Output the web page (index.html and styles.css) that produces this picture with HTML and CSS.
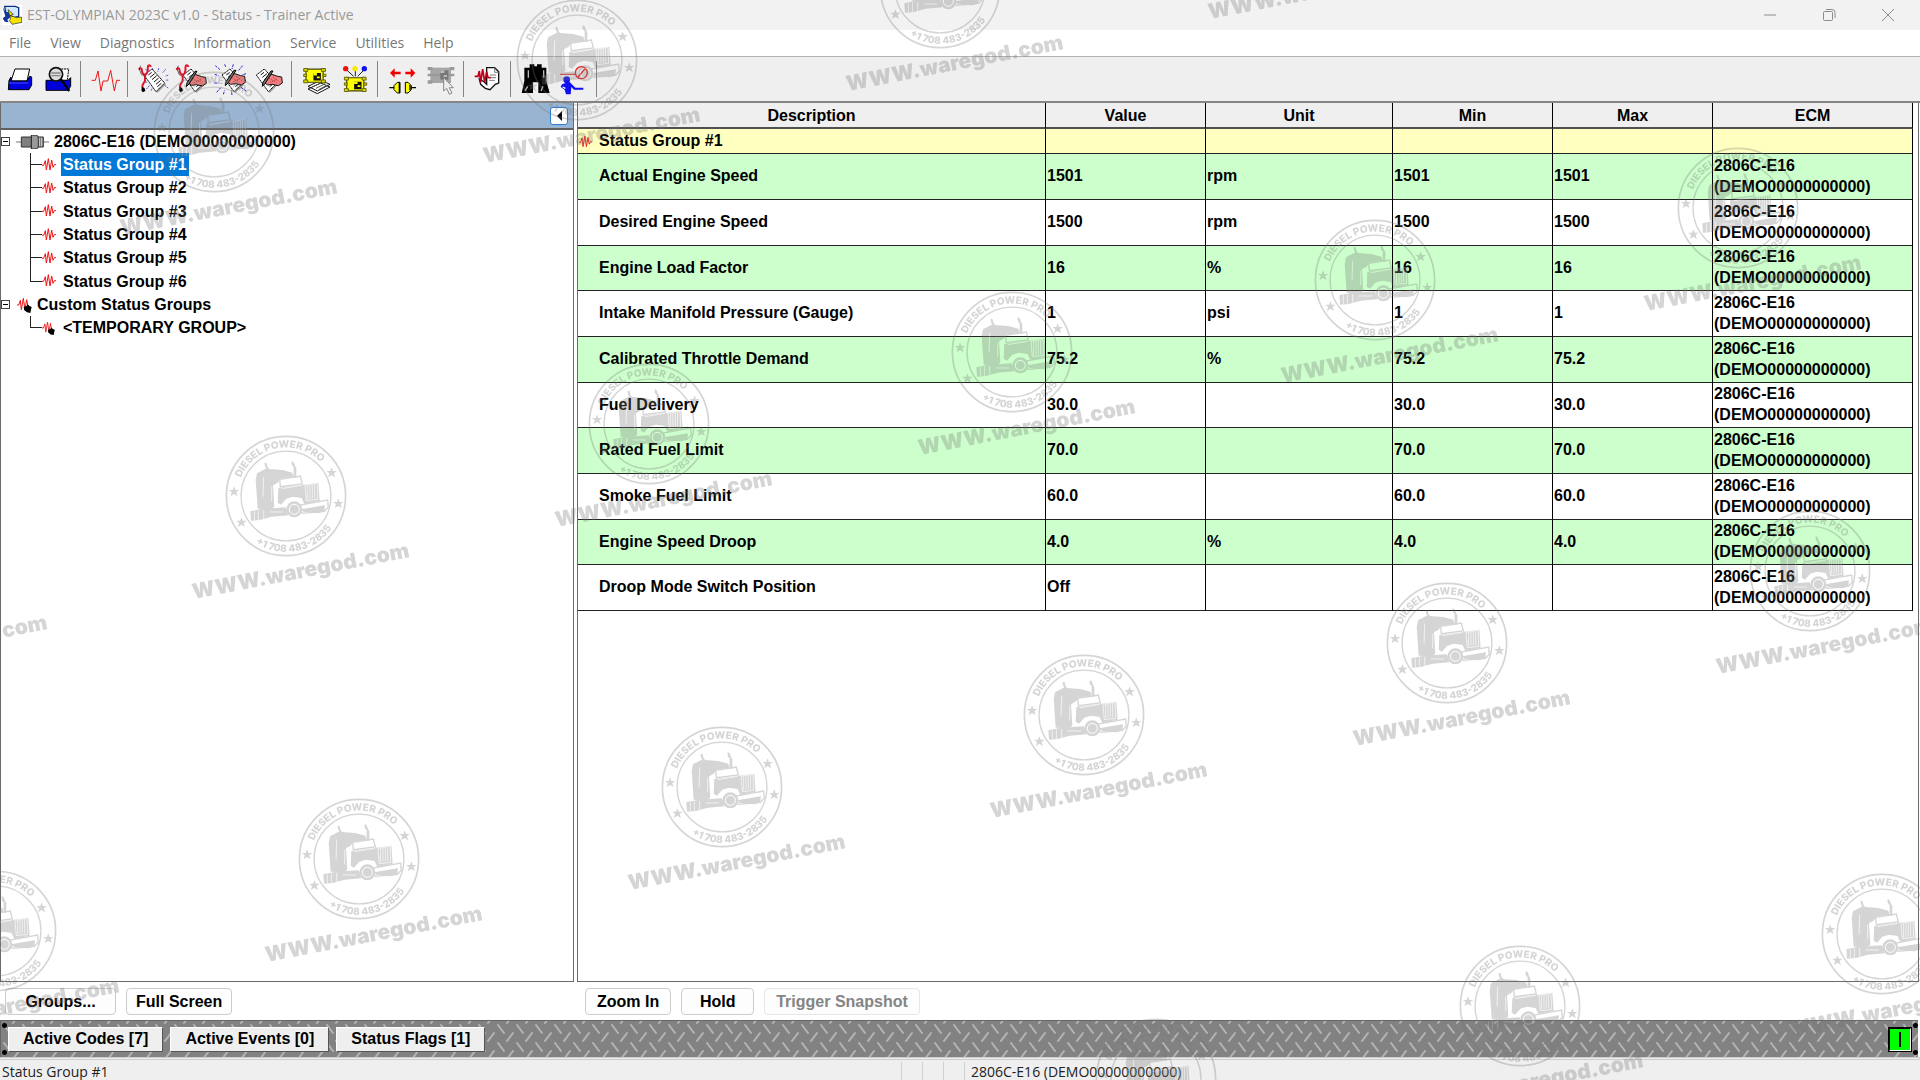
FILE: index.html
```html
<!DOCTYPE html>
<html lang="en">
<head>
<meta charset="utf-8">
<title>EST-OLYMPIAN 2023C v1.0 - Status - Trainer Active</title>
<link rel="stylesheet" href="styles.css">
</head>
<body>
<svg class="defs" aria-hidden="true">
  <defs>
    <symbol id="wave" viewBox="0 0 42 42"><path d="M0 22h5l5-14 3 28 6-34 5 34 5-30 4 22 4-8h5" fill="none" stroke="#f01414" stroke-width="3"/></symbol>
    <symbol id="wave-custom" viewBox="0 0 48 48"><path d="M0 24h5l5-14 3 28 6-34 5 34 5-30 4 22h8" fill="none" stroke="#f01414" stroke-width="3"/><path d="M20 30l8-2 4-6 6 6 6 2-2 8-2 10-10-2-8-6z" fill="#000"/></symbol>
    <symbol id="page" viewBox="0 0 99 99"><path d="M24 36l24-18 38 42-26 26z" fill="#999" transform="translate(4 4)"/><path d="M24 36l24-18 38 42-26 26z" fill="#fff" stroke="#111" stroke-width="3" stroke-dasharray="5 1"/><path d="M37 36l10-8M42 43l14-11M48 50l14-12M54 57l14-12M60 64l14-12M64 71l12-10" stroke="#111" stroke-width="3"/></symbol>
    <symbol id="scope" viewBox="0 0 99 99"><path d="M4 20c6-8 10-4 10 4s8 14 14 8 2-16 4-22 8-2 8 2M25 35c-6 8 2 14-4 22s-8 14-4 20" fill="none" stroke="#e0142c" stroke-width="6"/><path d="M10 8l-4 10 6 16 10 6" fill="none" stroke="#222" stroke-width="2"/><path d="M14 72l8 4 2 8-8 4-4-6z" fill="#000"/></symbol>
    <symbol id="hand" viewBox="0 0 99 99"><path d="M36 46l18-14 18 6 12 2 2 18-12 8-18-4-14 2-8-6z" fill="#f08080" stroke="#111" stroke-width="3"/><path d="M46 44l22 12M58 40l18 14M50 56l20-10" stroke="#b83434" stroke-width="3" stroke-dasharray="3 3"/><path d="M58 22L34 60l-8 8 2-12 24-34z" fill="#777" stroke="#000" stroke-width="3"/></symbol>
    <symbol id="rays" viewBox="0 0 99 99"><path d="M58 4l-4 14M86 8L74 22M96 32l-12 4M96 52H84M96 84L80 72M54 96l-2-14M32 4l4 10M4 8l14 12M2 34l12 4M2 60h12M8 88l14-16M28 94l4-12" stroke="#2222e8" stroke-width="3" stroke-dasharray="8 3"/></symbol>
    <symbol id="chip" viewBox="0 0 99 70"><path d="M18 12h60v46H18z" fill="#ff0" stroke="#444400" stroke-width="4"/><path d="M10 10h14v10H10zM72 10h14v10H72zM10 30h10v8H10zM78 30h10v8H78zM10 50h14v10H10zM72 50h14v10H72z" fill="#d8d800" stroke="#555500" stroke-width="3"/><path d="M44 26h26v26H44z" fill="#111"/><path d="M44 26h12v8H44zM56 38h10v6H56z" fill="#ff0"/></symbol>
    <symbol id="star" viewBox="-12 -12 24 24"><path d="M0-12l3 8h9l-7 5 3 9-8-5-8 5 3-9-7-5h9z"/></symbol>
    <path id="arc-top" d="M-146 0A146 146 0 0 1 146 0"/>
    <path id="arc-bottom" d="M-168 0A168 168 0 0 0 168 0"/>
    <g id="stamp">
      <g transform="scale(.333)">
        <g fill="none" stroke="currentColor"><circle r="179" stroke-width="5"/><circle r="135" stroke-width="4"/></g>
        <g class="stamp-ring" transform="rotate(-11)">
          <text><textPath href="#arc-top" startOffset="50%">DIESEL POWER PRO</textPath></text>
          <text><textPath href="#arc-bottom" startOffset="50%">+1 708 483-2835</textPath></text>
        </g>
        <g transform="translate(-319 -228)" fill="currentColor">
          <use href="#star" x="147" y="199" width="32" height="32"/><use href="#star" x="440" y="142" width="32" height="32"/>
          <use href="#star" x="169" y="292" width="32" height="32"/><use href="#star" x="460" y="235" width="32" height="32"/>
          <path d="M232 160l26-14 50 4 30 8 4 12-40 6-8 12-14 8 4 64-12 8-38-2-6-86z"/>
          <path d="M262 250V150q-6-8-8-20l6-2 4 14 8 10v90zM342 172V142q-8-6-6-18l6 2 4 12 4 6v30z"/>
          <path d="M300 178l62-10 6 24-66 8z" fill="none" stroke="currentColor" stroke-width="4"/>
          <path d="M296 204l76-10 44-6 4 54-46 10-8-18-26-4-20 6-16 18-10-6z"/>
          <path d="M376 196l36-6 2 48-34 4z" fill="none" stroke="#fff" stroke-width="2"/>
          <path d="M384 196v42M391 195v42M398 194v42M405 193v42M306 206l60-10M252 170l-2 60M276 200v44" stroke="#fff" stroke-width="2"/>
          <path d="M356 256l88-16 2 22-12 12-66 6z" fill="none" stroke="currentColor" stroke-width="4"/>
          <path d="M364 268l72-12-2 18-18 6-44-4z"/>
          <path d="M212 274l38-8 68-4 8 24-50 4-36 10-26 2z"/>
          <path d="M224 274v26M236 272v28M252 270v26M270 276h40" stroke="#fff" stroke-width="2"/>
          <circle cx="344" cy="268" r="24"/><circle cx="344" cy="268" r="15" fill="none" stroke="#fff" stroke-width="3"/>
        </g>
      </g>
      <text class="stamp-url" transform="translate(16 82) rotate(-11)">WWW.waregod.com</text>
    </g>
  </defs>
</svg>

<header class="titlebar">
  <svg class="app-icon" viewBox="0 0 60 60" aria-hidden="true"><path d="M0 0h60v60H0z" fill="#fff"/><path d="M8 4h32l10 4v26l-14 4L12 26z" fill="#cfe8fa" stroke="#102a80" stroke-width="4"/><path d="M2 6l8 14 10 2 6 14-10 8 4 8-12-2L2 40l8-6z" fill="#123a9c"/><path d="M18 14l16 14-10 4 22 6 12-2 2 16-30 6-8-12 4-4z" fill="#f4e400" stroke="#222" stroke-width="2"/></svg>
  <h1 class="title">EST-OLYMPIAN 2023C v1.0 - Status - Trainer Active</h1>
  <div class="window-controls">
    <button aria-label="Minimize"><svg viewBox="0 0 14 14"><path d="M1 7h12"/></svg></button>
    <button aria-label="Restore"><svg viewBox="0 0 14 14"><rect x="1.500" y="3.500" width="9" height="9" rx="1"/><path d="M4 1.500h6a3 3 0 0 1 3 3V10"/></svg></button>
    <button aria-label="Close"><svg viewBox="0 0 14 14"><path d="M1 1l12 12M13 1L1 13"/></svg></button>
  </div>
</header>

<nav class="menubar">
  <button>File</button><button>View</button><button>Diagnostics</button><button>Information</button><button>Service</button><button>Utilities</button><button>Help</button>
</nav>

<div class="toolbar" role="toolbar" aria-label="Main tools">
  <button aria-label="Print"><svg viewBox="0 0 99 99"><path d="M36 18h44l-8 36H24z" fill="#fff" stroke="#000" stroke-width="3"/><path d="M18 52l6-10v12h48l8-14 6 2v24l-8 14H16z" fill="#00d" stroke="#000" stroke-width="3"/><path d="M18 60h58" stroke="#4a4aff" stroke-width="3"/></svg></button>
  <button aria-label="Print preview"><svg viewBox="0 0 99 99"><path d="M50 18h30l-4 34H34z" fill="#fff" stroke="#000" stroke-width="3" stroke-dasharray="6 2"/><path d="M12 52h66l8-8v26l-8 12H12z" fill="#00d" stroke="#000" stroke-width="3"/><circle cx="42" cy="34" r="20" fill="#ddd" stroke="#111" stroke-width="5"/><path d="M28 30h28M28 38h28" stroke="#888" stroke-width="4"/><path d="M56 48l26 36" stroke="#000" stroke-width="7"/></svg></button>
  <span class="sep"></span>
  <button aria-label="Status"><svg viewBox="0 0 99 99"><path d="M8 52h11l8-28 9 60 6-30h14l9-32 11 62 7-32h10" fill="none" stroke="#f01414" stroke-width="3"/></svg></button>
  <span class="sep"></span>
  <button aria-label="Active diagnostic codes"><svg viewBox="0 0 99 99"><use href="#rays" x="25" width="74" height="99"/><use href="#page"/><use href="#scope" x="4"/></svg></button>
  <button aria-label="Logged diagnostic codes"><svg viewBox="0 0 99 99"><use href="#page"/><use href="#hand" x="8" y="3"/><use href="#scope"/></svg></button>
  <button aria-label="Active events"><svg viewBox="0 0 99 99"><use href="#rays"/><use href="#page"/><use href="#hand" x="8"/></svg></button>
  <button aria-label="Logged events"><svg viewBox="0 0 99 99"><use href="#page" x="-14"/><use href="#hand" x="2" y="2"/></svg></button>
  <span class="sep"></span>
  <button aria-label="ECM summary"><svg viewBox="0 0 99 99"><path d="M24 78l38-18 28 12-38 20zM24 70l38-18 28 12-38 20z" fill="#fff" stroke="#111" stroke-width="3"/><path d="M36 72l28-12M48 76l28-14M56 80l26-14" stroke="#555" stroke-width="3"/><use href="#chip" width="90" height="60" y="8"/></svg></button>
  <button aria-label="Configuration"><svg viewBox="0 0 99 99"><path d="M22 20l22 20M49 18v22M76 20L56 40" stroke="#222" stroke-width="3"/><circle cx="20" cy="17" r="8" fill="#f01010"/><circle cx="48" cy="17" r="8" fill="#f8e800"/><circle cx="76" cy="17" r="8" fill="#1010f0"/><use href="#chip" x="5" y="34" width="90" height="60"/></svg></button>
  <span class="sep"></span>
  <button aria-label="Connect"><svg viewBox="0 0 99 99"><path d="M12 30l14-14v10h18v8H26v10zM88 30L74 16v10H58v8h16v10z" fill="#f00000"/><path d="M10 74h16M74 74h16" stroke="#000" stroke-width="4"/><path d="M42 58v32h-8l-10-10V68l10-10zM58 58v32h8l10-10V68L66 58z" fill="#ff0" stroke="#000" stroke-width="3"/><path d="M40 58v32M72 66v16" stroke="#000" stroke-width="4"/></svg></button>
  <button aria-label="Select ECM" disabled><svg viewBox="0 0 99 99"><path d="M16 14h62v46H16z" fill="#a6a6a6"/><path d="M8 12h14v10H8zM74 12h14v10H74zM8 32h80v8H8zM8 52h14v10H8z" fill="#9a9a9a"/><path d="M46 22h24v28H46z" fill="#777"/><path d="M46 22h12v8H46zM56 36h10v6H56z" fill="#bbb"/><path d="M56 44v40l9-8 8 18 8-4-8-16h12z" fill="#eee" stroke="#888" stroke-width="3"/></svg></button>
  <span class="sep"></span>
  <button aria-label="Status report"><svg viewBox="0 0 99 99"><path d="M44 14h24l12 12v34l-10 4-16 16-14-4-14-12-4-16 14 8 8 8z" fill="#fff" stroke="#111" stroke-width="4"/><path d="M68 14v14h12M54 36h18M52 44h20M52 52h16" fill="none" stroke="#777" stroke-width="3"/><path d="M8 40h10l4-16 4 34 6-40 6 40 6-32 4 18h8" fill="none" stroke="#c00018" stroke-width="5"/></svg></button>
  <span class="sep"></span>
  <button aria-label="Find"><svg viewBox="0 0 99 99"><path d="M32 4h14v6h8V4h14v10h14v40l10 36H58V58H42v32H8l8-36V14h16z" fill="#000"/><path d="M28 22v22M74 22v22M18 84l8-14M66 84l6-14" stroke="#bbb" stroke-width="4"/></svg></button>
  <button aria-label="Remove service tool"><svg viewBox="0 0 99 99"><path d="M6 34h46" stroke="#f02020" stroke-width="3"/><circle cx="70" cy="29" r="18" fill="none" stroke="#f02020" stroke-width="4"/><path d="M60 42l22-26" stroke="#f02020" stroke-width="4"/><circle cx="26" cy="50" r="10" fill="#1010f0"/><path d="M12 64l22-8 18 18h24v6H48l-8-8-2 22H24l-4-14-12-8z" fill="#1010f0"/><path d="M14 72l8 4" stroke="#fff" stroke-width="4"/></svg></button>
  <span class="sep"></span>
</div>

<main class="workspace">
  <section class="sidebar">
    <div class="pane">
      <div class="pane-head"><button class="collapse" aria-label="Collapse panel"></button></div>
      <ul class="tree">
        <li>
          <div class="node"><span class="toggle"></span><svg class="ecm-icon" viewBox="0 0 99 42" aria-hidden="true"><path d="M0 18h99v6H0z" fill="#bbb"/><path d="M16 6h66v30H16z" fill="#808080" stroke="#333" stroke-width="3"/><path d="M46 0h16l5 6v30l-5 6H46z" fill="#999" stroke="#222" stroke-width="3"/><path d="M70 8v26M77 8v26" stroke="#ccc" stroke-width="3"/></svg><span class="label">2806C-E16 (DEMO00000000000)</span></div>
          <ul>
            <li class="node"><span class="branch"></span><svg class="leaf-icon"><use href="#wave"/></svg><span class="label selected">Status Group #1</span></li>
            <li class="node"><span class="branch"></span><svg class="leaf-icon"><use href="#wave"/></svg><span class="label">Status Group #2</span></li>
            <li class="node"><span class="branch"></span><svg class="leaf-icon"><use href="#wave"/></svg><span class="label">Status Group #3</span></li>
            <li class="node"><span class="branch"></span><svg class="leaf-icon"><use href="#wave"/></svg><span class="label">Status Group #4</span></li>
            <li class="node"><span class="branch"></span><svg class="leaf-icon"><use href="#wave"/></svg><span class="label">Status Group #5</span></li>
            <li class="node"><span class="branch"></span><svg class="leaf-icon"><use href="#wave"/></svg><span class="label">Status Group #6</span></li>
          </ul>
        </li>
        <li>
          <div class="node"><span class="toggle"></span><svg class="custom-icon"><use href="#wave-custom"/></svg><span class="label">Custom Status Groups</span></div>
          <ul>
            <li class="node"><span class="branch"></span><svg class="leaf-icon"><use href="#wave-custom"/></svg><span class="label">&lt;TEMPORARY GROUP&gt;</span></li>
          </ul>
        </li>
      </ul>
    </div>
    <div class="actions"><button class="wide">Groups...</button><button>Full Screen</button></div>
  </section>

  <section class="content">
    <div class="pane">
      <table class="grid">
        <colgroup><col><col class="c-value"><col class="c-unit"><col class="c-value"><col class="c-value"><col class="c-ecm"></colgroup>
        <thead><tr><th>Description</th><th>Value</th><th>Unit</th><th>Min</th><th>Max</th><th>ECM</th></tr></thead>
        <tbody class="group"><tr><td><svg class="group-icon"><use href="#wave"/></svg>Status Group #1</td><td></td><td></td><td></td><td></td><td></td></tr></tbody>
        <tbody class="rows">
          <tr><td>Actual Engine Speed</td><td>1501</td><td>rpm</td><td>1501</td><td>1501</td><td>2806C-E16 (DEMO00000000000)</td></tr>
          <tr><td>Desired Engine Speed</td><td>1500</td><td>rpm</td><td>1500</td><td>1500</td><td>2806C-E16 (DEMO00000000000)</td></tr>
          <tr><td>Engine Load Factor</td><td>16</td><td>%</td><td>16</td><td>16</td><td>2806C-E16 (DEMO00000000000)</td></tr>
          <tr><td>Intake Manifold Pressure (Gauge)</td><td>1</td><td>psi</td><td>1</td><td>1</td><td>2806C-E16 (DEMO00000000000)</td></tr>
          <tr><td>Calibrated Throttle Demand</td><td>75.2</td><td>%</td><td>75.2</td><td>75.2</td><td>2806C-E16 (DEMO00000000000)</td></tr>
          <tr><td>Fuel Delivery</td><td>30.0</td><td></td><td>30.0</td><td>30.0</td><td>2806C-E16 (DEMO00000000000)</td></tr>
          <tr><td>Rated Fuel Limit</td><td>70.0</td><td></td><td>70.0</td><td>70.0</td><td>2806C-E16 (DEMO00000000000)</td></tr>
          <tr><td>Smoke Fuel Limit</td><td>60.0</td><td></td><td>60.0</td><td>60.0</td><td>2806C-E16 (DEMO00000000000)</td></tr>
          <tr><td>Engine Speed Droop</td><td>4.0</td><td>%</td><td>4.0</td><td>4.0</td><td>2806C-E16 (DEMO00000000000)</td></tr>
          <tr><td>Droop Mode Switch Position</td><td>Off</td><td></td><td></td><td></td><td>2806C-E16 (DEMO00000000000)</td></tr>
        </tbody>
      </table>
    </div>
    <div class="actions"><button>Zoom In</button><button class="hold">Hold</button><button disabled>Trigger Snapshot</button></div>
  </section>
</main>

<div class="tread">
  <span class="screws"></span>
  <button>Active Codes [7]</button><button>Active Events [0]</button><button>Status Flags [1]</button>
  <span class="link-light" role="img" aria-label="Connected"></span>
  <span class="screws"></span>
</div>

<footer class="statusbar">
  <span class="message">Status Group #1</span><span class="cell"></span><span class="cell"></span><span class="cell"></span><span class="ecm">2806C-E16 (DEMO00000000000)</span>
</footer>

<svg class="stamps" aria-hidden="true">
  <use href="#stamp" x="214" y="132"/><use href="#stamp" x="577" y="60"/><use href="#stamp" x="940" y="-12"/><use href="#stamp" x="1302" y="-84"/>
  <use href="#stamp" x="-76" y="568"/><use href="#stamp" x="286" y="496"/><use href="#stamp" x="649" y="424"/><use href="#stamp" x="1012" y="352"/><use href="#stamp" x="1375" y="280"/><use href="#stamp" x="1738" y="208"/>
  <use href="#stamp" x="-4" y="931"/><use href="#stamp" x="359" y="859"/><use href="#stamp" x="722" y="787"/><use href="#stamp" x="1084" y="715"/><use href="#stamp" x="1447" y="643"/><use href="#stamp" x="1810" y="571"/>
  <use href="#stamp" x="1156" y="1079"/><use href="#stamp" x="1520" y="1006"/><use href="#stamp" x="1882" y="934"/>
</svg>
</body>
</html>
```
FILE: styles.css
```css
* { box-sizing: border-box; }
body {
  margin: 0;
  min-height: 100vh;
  display: flex;
  flex-direction: column;
  background: #fff;
  color: #000;
  font: bold 16px/21px "Liberation Sans", Arial, sans-serif;
}
button { font: inherit; color: inherit; margin: 0; }
ul { list-style: none; margin: 0; padding: 0; }
.defs { position: absolute; width: 0; height: 0; }

/* Window frame */
.titlebar { display: flex; align-items: center; height: 30px; padding-left: 2px; background: #f2f2f2; }
.app-icon { width: 20px; height: 20px; }
.title { margin: 0 auto 0 5px; font: 14px/20px "Open Sans", "Noto Sans", sans-serif; color: #999; }
.window-controls { display: flex; padding-right: 3px; }
.window-controls button { display: flex; justify-content: center; align-items: center; width: 59px; height: 28px; padding: 0; border: 0; background: none; }
.window-controls svg { width: 14px; height: 14px; fill: none; stroke: #8c8c8c; stroke-width: 1; }
.menubar { display: flex; gap: 1px; height: 27px; background: #fff; border-bottom: 1px solid #b4b4b4; }
.menubar button { padding: 0 9px; border: 0; background: none; font: 14px/26px "Open Sans", "Noto Sans", sans-serif; color: #777; }

/* Toolbar */
.toolbar { display: flex; align-items: center; height: 46px; background: #efefef; border-bottom: 2px solid #858585; }
.toolbar button { display: flex; justify-content: center; width: 39px; padding: 0; border: 0; background: none; }
.toolbar svg { width: 33px; height: 33px; }
.sep { width: 1px; height: 36px; margin: 0 5px 0 2px; background: #858585; }

/* Panes */
.workspace { flex: 1; display: flex; gap: 3px; }
.sidebar { flex: 0 0 574px; }
.content { flex: 1; min-width: 0; }
.sidebar, .content { display: flex; flex-direction: column; }
.pane { flex: 1; border: 1px solid #6a6a6a; border-top: 0; }
.content .pane { margin-right: 1px; }
.pane-head { display: flex; justify-content: flex-end; align-items: center; height: 27px; padding-right: 5px; background: #99b4d1; border-bottom: 2px solid #606060; }
.collapse { display: flex; justify-content: center; align-items: center; width: 18px; height: 18px; padding: 0; border: 1px solid #2a7fd0; border-radius: 3px; background: #fff; }
.collapse::before { content: ""; border: 5px solid transparent; border-left: 0; border-right-color: #000; }

/* Tree */
.node { display: flex; align-items: center; height: 23px; }
.tree ul > .node:nth-child(3n) { height: 24px; }
.toggle { width: 9px; height: 9px; border: 1px solid #444; background: linear-gradient(#000, #000) center / 5px 1px no-repeat #fff; }
.ecm-icon { width: 33px; height: 14px; margin: 0 3px 0 6px; }
.custom-icon { width: 16px; height: 16px; margin: 0 2px 0 7px; }
.leaf-icon { width: 14px; height: 14px; margin-right: 5px; }
.branch {
  align-self: stretch;
  width: 12px;
  margin-left: 29px;
  background: linear-gradient(#222, #222) left top / 1px 100% no-repeat, linear-gradient(#222, #222) left center / 12px 1px no-repeat;
}
.node:last-child > .branch { background-size: 1px 50%, 12px 1px; }
.label { padding: 0 2px; line-height: 23px; white-space: nowrap; }
.selected { background: #0078d7; color: #fff; }

/* Parameter table */
.grid { width: calc(100% - 5px); table-layout: fixed; border-collapse: separate; border-spacing: 0; }
.c-value { width: 160px; }
.c-unit { width: 187px; }
.c-ecm { width: 200px; }
.grid th, .grid td { padding: 0 1px 2px; border-right: 1px solid #000; border-bottom: 1px solid #222; text-align: left; vertical-align: middle; }
.grid th { height: 26px; padding: 1px 0 0; text-align: center; background: #efefef; border-bottom: 2px solid #505050; }
.grid .group td { height: 25px; background: #ffffbf; }
.group-icon { width: 13px; height: 14px; margin: 0 7px 0 0; vertical-align: -3px; }
.rows td { height: 46px; }
.rows tr:nth-child(3n) td { height: 45px; }
.grid .rows td:first-child { padding-left: 21px; }
.rows tr:nth-child(odd) { background: #ccffcc; }

/* Pane actions */
.actions { display: flex; gap: 10px; height: 38px; padding: 6px 0 0 5px; }
.content .actions { padding-left: 8px; }
.actions button { height: 27px; padding: 0 9px; border: 1px solid #ccc; border-radius: 4px; background: #fdfdfd; }
.content .actions button { padding: 0 11px; }
.actions .wide { width: 111px; }
.actions .hold { width: 73px; }
.actions button:disabled { color: #848484; border-color: #e6e6e6; }

/* Tread plate */
.tread {
  display: flex;
  align-items: center;
  gap: 6px;
  height: 37px;
  margin-right: 2px;
  border-top: 1px solid #666;
  border-left: 1px solid #666;
  background: #828282 url("data:image/svg+xml,%3Csvg xmlns='http://www.w3.org/2000/svg' width='19' height='18'%3E%3Cpath d='M3 4l6 8M12 20l6-8M12 2l6-8' stroke='%23b4b4b4' stroke-width='2' stroke-linecap='round'/%3E%3C/svg%3E");
}
.tread button { height: 25px; padding: 0 14px; border: 1px solid; border-color: #fff #555 #555 #fff; background: #efefef; line-height: 22px; }
.tread button + button { margin-left: 1px; }
.screws { align-self: stretch; width: 5px; margin-left: 1px; background: radial-gradient(circle, #000 2px, transparent 3px) 0 0 / 5px 9px no-repeat, radial-gradient(circle, #000 2px, transparent 3px) 0 100% / 5px 9px no-repeat; }
.tread button:first-of-type { margin-left: -5px; }
.link-light { width: 24px; height: 25px; margin: 0 -6px 0 auto; border: 2px solid; border-color: #000 #fff #fff #000; outline: 1px solid #000; outline-offset: -1px; background: linear-gradient(#000, #000) center / 2px 15px no-repeat #0f0; }

/* Status bar */
.statusbar { display: flex; height: 23px; padding: 2px 0 0 2px; background: #efefef; border-top: 3px double #ccc; font: 14px/20px "Open Sans", "Noto Sans", sans-serif; color: #222; overflow: hidden; }
.message { width: 899px; }
.cell { width: 21px; border-left: 1px solid #d0d0d0; }
.ecm { padding-left: 6px; border-left: 1px solid #d0d0d0; }

/* Watermark layer */
.stamps { position: fixed; inset: 0; width: 100%; height: 100%; color: #777; opacity: .31; pointer-events: none; }
.stamp-ring text { font: 800 30px Inter, sans-serif; text-anchor: middle; fill: currentColor; }
.stamp-url { font: 900 21px Inter, sans-serif; text-anchor: middle; fill: currentColor; }
```
